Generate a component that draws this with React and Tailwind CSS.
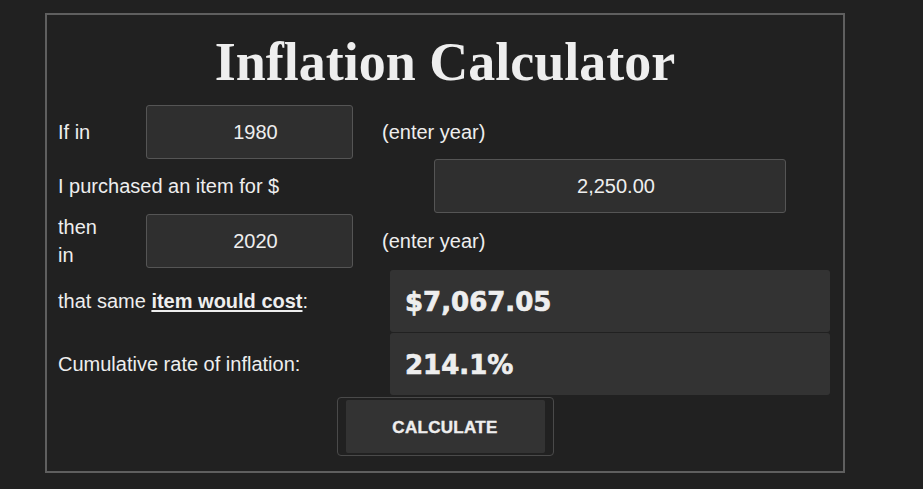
import React from "react";

const sans = { fontFamily: '"Liberation Sans", Arial, sans-serif' };
const heavy = { fontFamily: '"DejaVu Sans", "Liberation Sans", sans-serif' };

function Input({ value, className }) {
  return (
    <div
      className={`flex h-[54px] items-center justify-center rounded-[3px] border border-[#555] bg-[#2f2f2f] pl-[12px] text-[20px] text-[#eee] ${className}`}
    >
      {value}
    </div>
  );
}

export default function App() {
  return (
    <div className="h-[489px] w-[923px] overflow-hidden bg-[#212121] pt-[13px] pl-[45px]" style={sans}>
      <div className="flex h-[460px] w-[800px] flex-col border-2 border-[#5f5f5f] bg-[#212121] text-[20px] text-[#eee]">
        <div
          className="h-[90px] pt-[20px] text-center text-[54px] leading-[54px] font-bold text-[#eee]"
          style={{ fontFamily: '"Liberation Serif", "Times New Roman", serif' }}
        >
          Inflation Calculator
        </div>

        {/* Row 1 */}
        <div className="flex h-[54px] items-center">
          <div className="w-[99px] pl-[11px]">If in</div>
          <Input value="1980" className="w-[207px]" />
          <div className="pl-[29px]">(enter year)</div>
        </div>

        {/* Row 2 */}
        <div className="flex h-[54px] items-center">
          <div className="w-[387px] pl-[11px]">I purchased an item for $</div>
          <Input value="2,250.00" className="w-[352px]" />
        </div>

        {/* Row 3 */}
        <div className="mt-[1px] flex h-[54px] items-center">
          <div className="w-[99px] pl-[11px]">
            <div className="w-[50px] leading-[28px]">then in</div>
          </div>
          <Input value="2020" className="w-[207px]" />
          <div className="pl-[29px]">(enter year)</div>
        </div>

        {/* Row 4 */}
        <div className="mt-[2px] flex h-[62px] items-center">
          <div className="w-[343px] pl-[11px]">
            that same <span className="font-bold underline underline-offset-2">item would cost</span>:
          </div>
          <div
            className="flex h-full w-[440px] items-center rounded-[3px] bg-[#333] pl-[15px] pt-[2px] text-[26px] font-bold [-webkit-text-stroke:0.7px_#eee]"
            style={heavy}
          >
            $7,067.05
          </div>
        </div>

        {/* Row 5 */}
        <div className="mt-[1px] flex h-[62px] items-center">
          <div className="w-[343px] pl-[11px]">Cumulative rate of inflation:</div>
          <div
            className="flex h-full w-[440px] items-center rounded-[3px] bg-[#333] pl-[15px] pt-[2px] text-[26px] font-bold [-webkit-text-stroke:0.7px_#eee]"
            style={heavy}
          >
            214.1%
          </div>
        </div>

        {/* Button */}
        <div className="mt-[2px] flex justify-center">
          <div className="rounded-[4px] border border-[#4a4a4a] px-[8px] py-[2px]">
            <div className="flex h-[53px] w-[199px] items-center justify-center rounded-[2px] bg-[#333] pt-[2px] text-[17px] font-bold tracking-[0.3px] text-[#eee] [-webkit-text-stroke:0.4px_#eee]">
              CALCULATE
            </div>
          </div>
        </div>
      </div>
    </div>
  );
}
